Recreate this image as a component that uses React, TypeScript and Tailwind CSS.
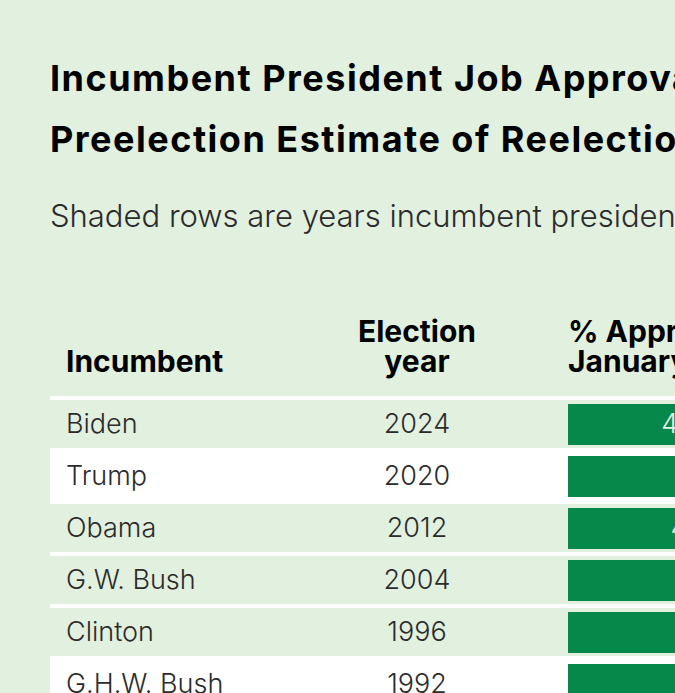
import React from 'react';

type Row = { name: string; year: number; pct: number; shaded: boolean };

const rows: Row[] = [
  { name: 'Biden', year: 2024, pct: 41, shaded: true },
  { name: 'Trump', year: 2020, pct: 46, shaded: false },
  { name: 'Obama', year: 2012, pct: 45, shaded: true },
  { name: 'G.W. Bush', year: 2004, pct: 59, shaded: true },
  { name: 'Clinton', year: 1996, pct: 46, shaded: true },
  { name: 'G.H.W. Bush', year: 1992, pct: 46, shaded: false },
];

const App: React.FC = () => {
  return (
    <div className="min-h-screen w-full overflow-hidden bg-[#e2f0df] font-['Inter',sans-serif]">
      <div className="w-[1100px] pl-[50px] pt-[48px]">
        <h1 className="text-[36px] leading-[61px] font-bold text-black tracking-[1.5px]">
          Incumbent President Job Approval and
          <br />
          Preelection Estimate of Reelection Odds
        </h1>
        <p className="mt-[28px] text-[31px] leading-[36px] font-light text-[#2b2b2b]">
          Shaded rows are years incumbent presidents won reelection
        </p>

        <div className="mt-[82px]">
          {/* header */}
          <div className="grid grid-cols-[232px_270px_1fr] items-end pb-[20px] text-[30px] leading-[30px] font-bold text-black">
            <div className="px-4">Incumbent</div>
            <div className="px-4 text-center">
              Election
              <br />
              year
            </div>
            <div className="px-4">
              % Approval in
              <br />
              January of election year
            </div>
          </div>

          {rows.map((r) => (
            <div
              key={r.name}
              className={`grid grid-cols-[232px_270px_1fr] items-center h-[52px] border-t-4 border-white ${
                r.shaded ? 'bg-transparent' : 'bg-white'
              }`}
            >
              <div className="px-4 text-[27px] font-light text-[#2b2b2b]">{r.name}</div>
              <div className="px-4 text-center text-[27px] font-light text-[#2b2b2b]">{r.year}</div>
              <div className="px-4 py-1 h-full">
                <div
                  className="h-full bg-[#06884b] flex items-center justify-end pr-2 text-[27px] font-light text-[#e6f3e6]"
                  style={{ width: `${r.pct * 3.75}px` }}
                >
                  {r.pct}%
                </div>
              </div>
            </div>
          ))}
        </div>
      </div>
    </div>
  );
};

export default App;
